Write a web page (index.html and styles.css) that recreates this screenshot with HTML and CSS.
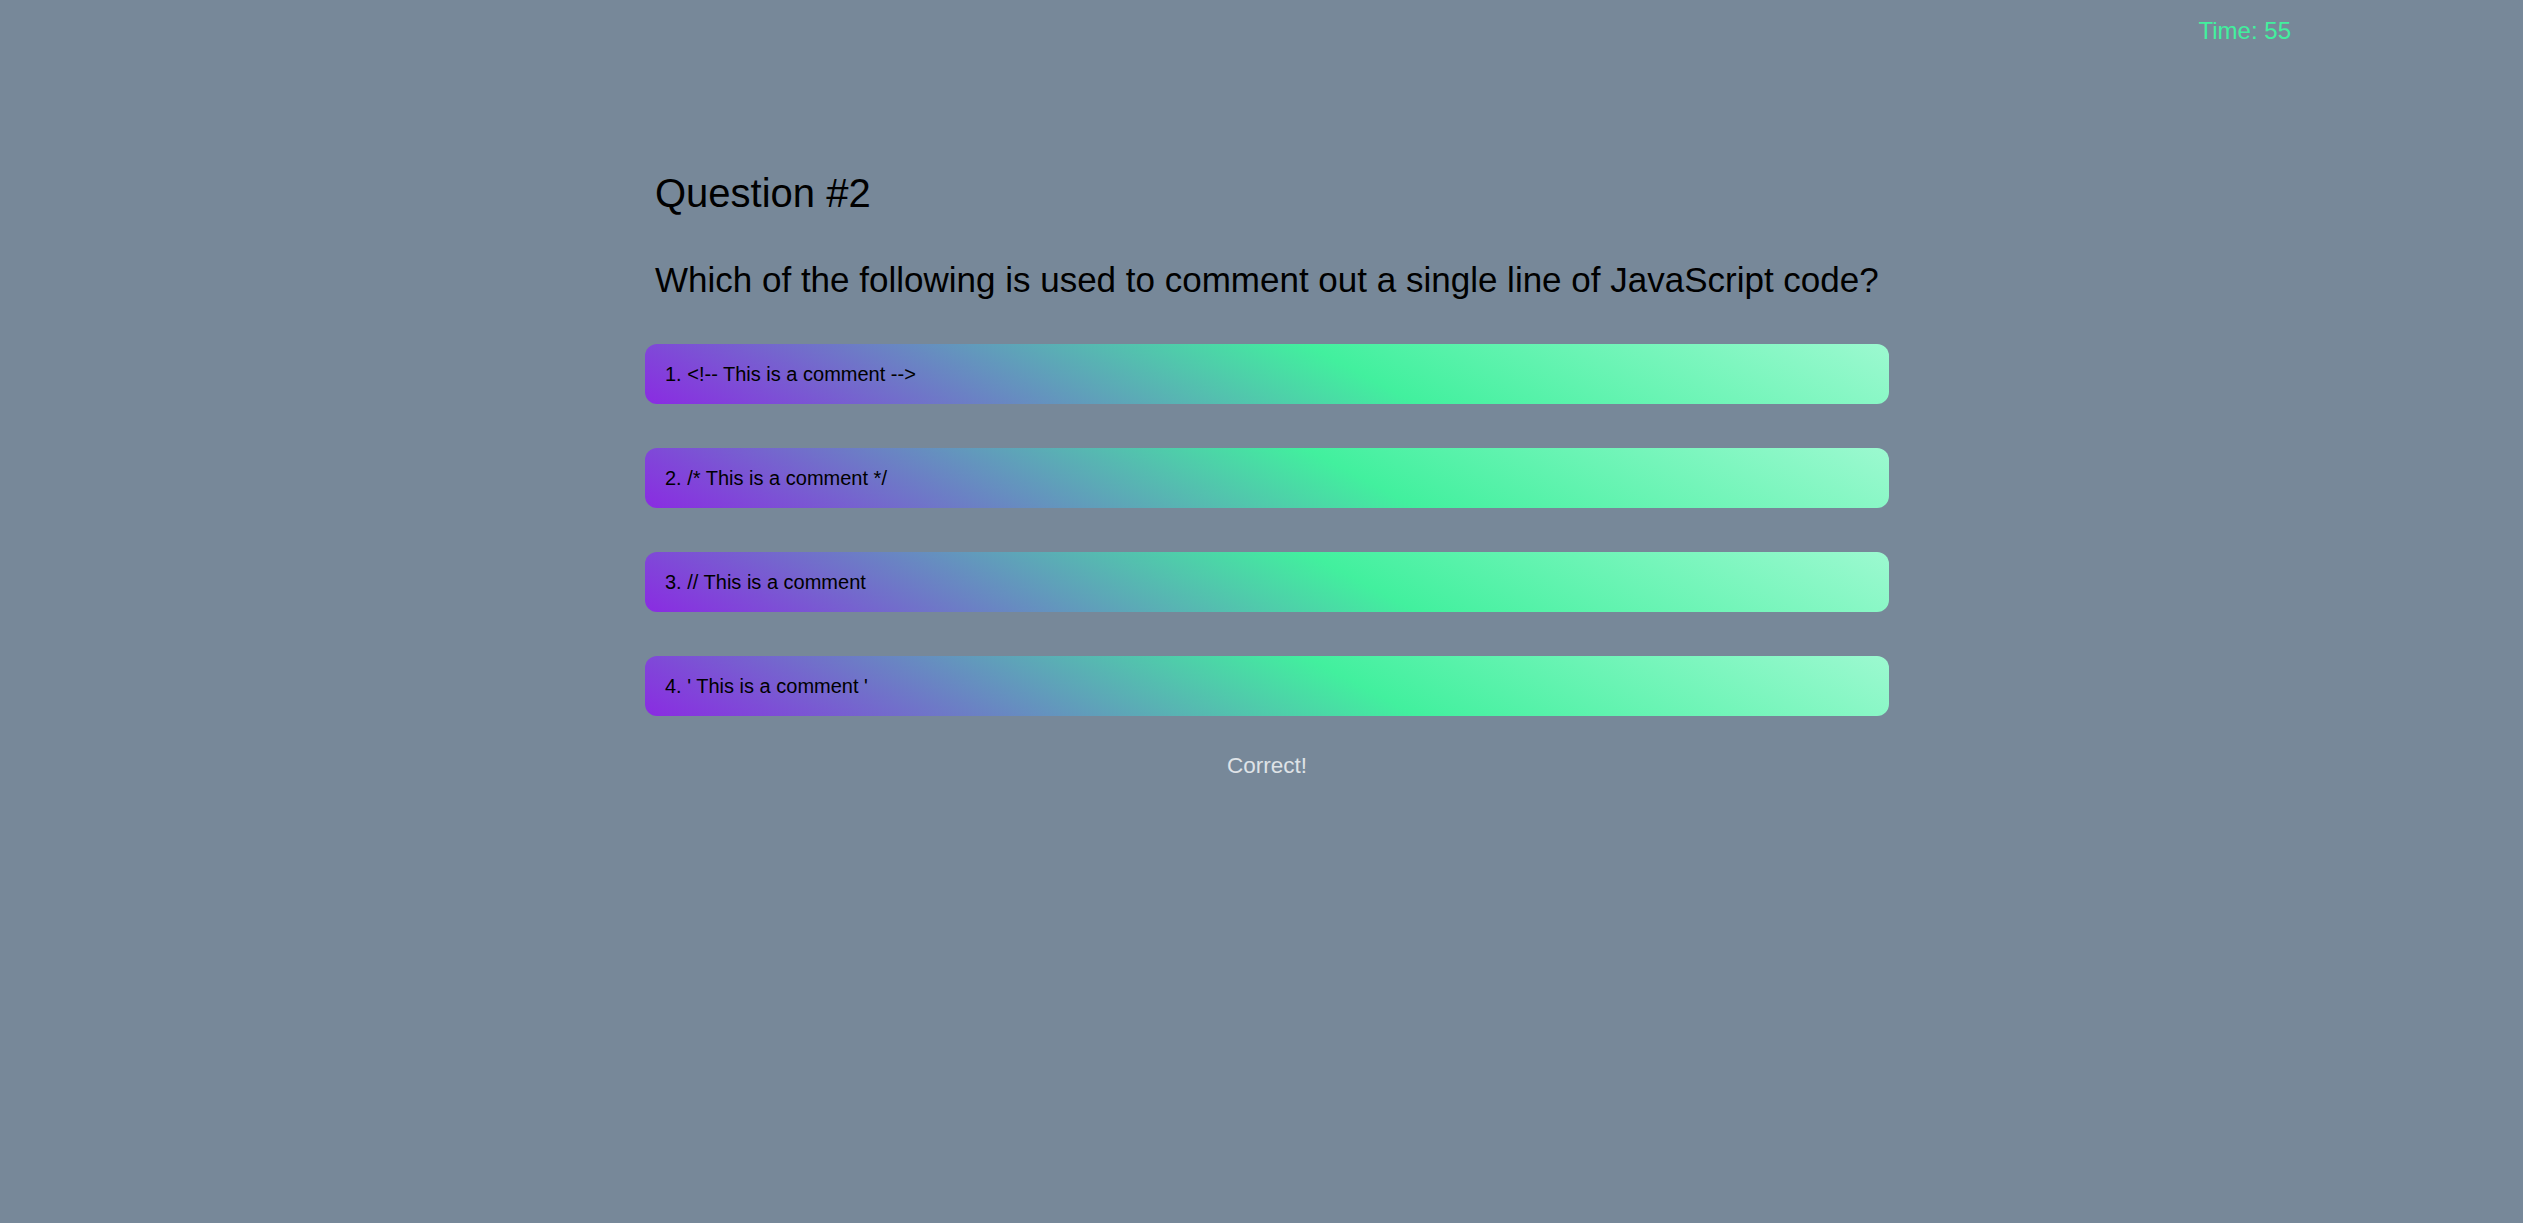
FILE: index.html
```html
<!DOCTYPE html>
<html lang="en">
<head>
<meta charset="utf-8">
<title>Code Quiz</title>
<link rel="stylesheet" href="styles.css">
</head>
<body>
<header class="header">
  <div class="timer">Time: 55</div>
</header>
<main class="quiz">
  <h1 class="quiz-title">Question #2</h1>
  <p class="quiz-question">Which of the following is used to comment out a single line of JavaScript code?</p>
  <div class="choices">
    <button class="choice">1. &lt;!-- This is a comment --&gt;</button>
    <button class="choice">2. /* This is a comment */</button>
    <button class="choice">3. // This is a comment</button>
    <button class="choice">4. ' This is a comment '</button>
  </div>
  <p class="feedback">Correct!</p>
</main>
</body>
</html>
```

FILE: styles.css
```css
* {
  box-sizing: border-box;
}

body {
  margin: 0;
  background: #778899;
  font-family: "Liberation Sans", Arial, sans-serif;
  color: #000;
}

.header {
  display: flex;
  justify-content: flex-end;
  padding: 17px 232px 0 0;
}

.timer {
  font-size: 24px;
  line-height: 28px;
  color: #42f09e;
}

.quiz {
  width: 1244px;
  margin: 125px 0 0 645px;
}

.quiz-title {
  margin: 0;
  padding-left: 10px;
  font-size: 40px;
  line-height: 46px;
  font-weight: normal;
}

.quiz-question {
  margin: 44px 0 0;
  padding-left: 10px;
  font-size: 35px;
  line-height: 40px;
}

.choices {
  display: flex;
  flex-direction: column;
  gap: 44px;
  margin-top: 44px;
}

.choice {
  display: block;
  width: 100%;
  height: 60px;
  padding: 0 20px;
  border: 0;
  border-radius: 12px;
  text-align: left;
  font-family: "Liberation Sans", Arial, sans-serif;
  font-size: 20px;
  color: #000;
  background: linear-gradient(28deg, #8a2be2 0%, #42f09e 57%, #9cf9d0 100%);
  cursor: pointer;
}

.feedback {
  margin: 36px 0 0;
  text-align: center;
  font-size: 22.5px;
  line-height: 28px;
  color: #dfe3e7;
}
```
